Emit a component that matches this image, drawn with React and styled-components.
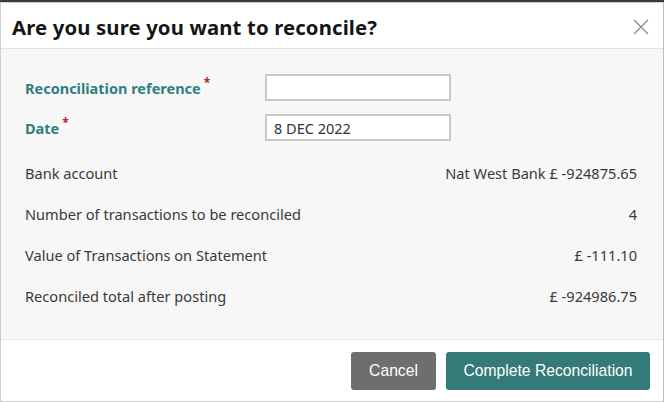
import React from 'react';
import styled, { createGlobalStyle } from 'styled-components';

const GlobalStyle = createGlobalStyle`
  html, body {
    margin: 0;
    padding: 0;
    background: #3a3a3a;
    font-family: 'Noto Sans', 'Open Sans', sans-serif;
  }
`;

const rows = [
  { label: 'Bank account', value: 'Nat West Bank £ -924875.65' },
  { label: 'Number of transactions to be reconciled', value: '4' },
  { label: 'Value of Transactions on Statement', value: '£ -111.10' },
  { label: 'Reconciled total after posting', value: '£ -924986.75' },
];

const App = () => {
  return (
    <>
      <GlobalStyle />
      <Modal>
        <Header>
          <Title>Are you sure you want to reconcile?</Title>
          <CloseButton aria-label='Close'>
            <svg width='16' height='16' viewBox='0 0 16 16'>
              <path d='M1 1 L15 15 M15 1 L1 15' stroke='#8a8a8a' strokeWidth='1.3' fill='none' />
            </svg>
          </CloseButton>
        </Header>

        <Body>
          <FieldRow>
            <FieldLabel>
              Reconciliation reference<Required>*</Required>
            </FieldLabel>
            <Input type='text' defaultValue='' />
          </FieldRow>
          <FieldRow>
            <FieldLabel>
              Date<Required>*</Required>
            </FieldLabel>
            <Input type='text' defaultValue='8 DEC 2022' />
          </FieldRow>

          <Summary>
            {rows.map((row) => (
              <SummaryRow key={row.label}>
                <span>{row.label}</span>
                <span>{row.value}</span>
              </SummaryRow>
            ))}
          </Summary>
        </Body>

        <Footer>
          <Button $width='85px' $bg='#6e6e6e'>Cancel</Button>
          <Button $width='204px' $bg='#347a79'>Complete Reconciliation</Button>
        </Footer>
      </Modal>
    </>
  );
};

export default App;

const Modal = styled.div`
  margin-top: 2px;
  width: 662px;
  height: 398px;
  background: #fff;
  border: 1px solid #cdcdcd;
  border-right-color: #bdbdbd;
  display: flex;
  flex-direction: column;
`;

const Header = styled.div`
  height: 45px;
  display: flex;
  align-items: center;
  justify-content: space-between;
  padding: 0 14px 0 11px;
  border-bottom: 1px solid #e3e3e3;
  background: #fff;
`;

const Title = styled.h1`
  margin: 0;
  margin-top: 2px;
  font-size: 20.3px;
  font-weight: 700;
  color: #151515;
  letter-spacing: 0.15px;
`;

const CloseButton = styled.button`
  border: none;
  background: none;
  padding: 0;
  display: flex;
  margin-top: 2px;
  cursor: pointer;
`;

const Body = styled.div`
  flex: 1;
  background: #f7f7f7;
  padding: 25px 26px 0 24px;
  border-bottom: 1px solid #e6e6e6;
`;

const FieldRow = styled.div`
  display: grid;
  grid-template-columns: 240px 186px;
  align-items: center;
  margin-bottom: 13px;
`;

const FieldLabel = styled.label`
  font-size: 14.5px;
  font-weight: 700;
  color: #2f7e7f;
`;

const Required = styled.sup`
  color: #b3252a;
  font-size: 12px;
  margin-left: 3px;
  vertical-align: 7px;
  line-height: 0;
`;

const Input = styled.input`
  box-sizing: border-box;
  width: 186px;
  height: 27px;
  border: 2px solid #c9c9c9;
  background: #fff;
  padding: 0 7px;
  font-family: 'Noto Sans', 'Open Sans', sans-serif;
  font-size: 14.5px;
  color: #333;
  outline: none;
`;

const Summary = styled.div`
  margin-top: 22px;
  display: flex;
  flex-direction: column;
  gap: 21px;
`;

const SummaryRow = styled.div`
  display: flex;
  justify-content: space-between;
  font-size: 14.6px;
  line-height: 20px;
  color: #3a3a3a;
`;

const Footer = styled.div`
  height: 61px;
  display: flex;
  align-items: center;
  justify-content: flex-end;
  gap: 10px;
  padding-right: 13px;
  background: #fff;
`;

const Button = styled.button`
  box-sizing: border-box;
  width: ${(p) => p.$width};
  height: 38px;
  padding: 0;
  border: none;
  border-radius: 3px;
  font-family: 'Liberation Sans', Arial, sans-serif;
  font-size: 15.7px;
  color: #fff;
  background: ${(p) => p.$bg};
  cursor: pointer;
`;
